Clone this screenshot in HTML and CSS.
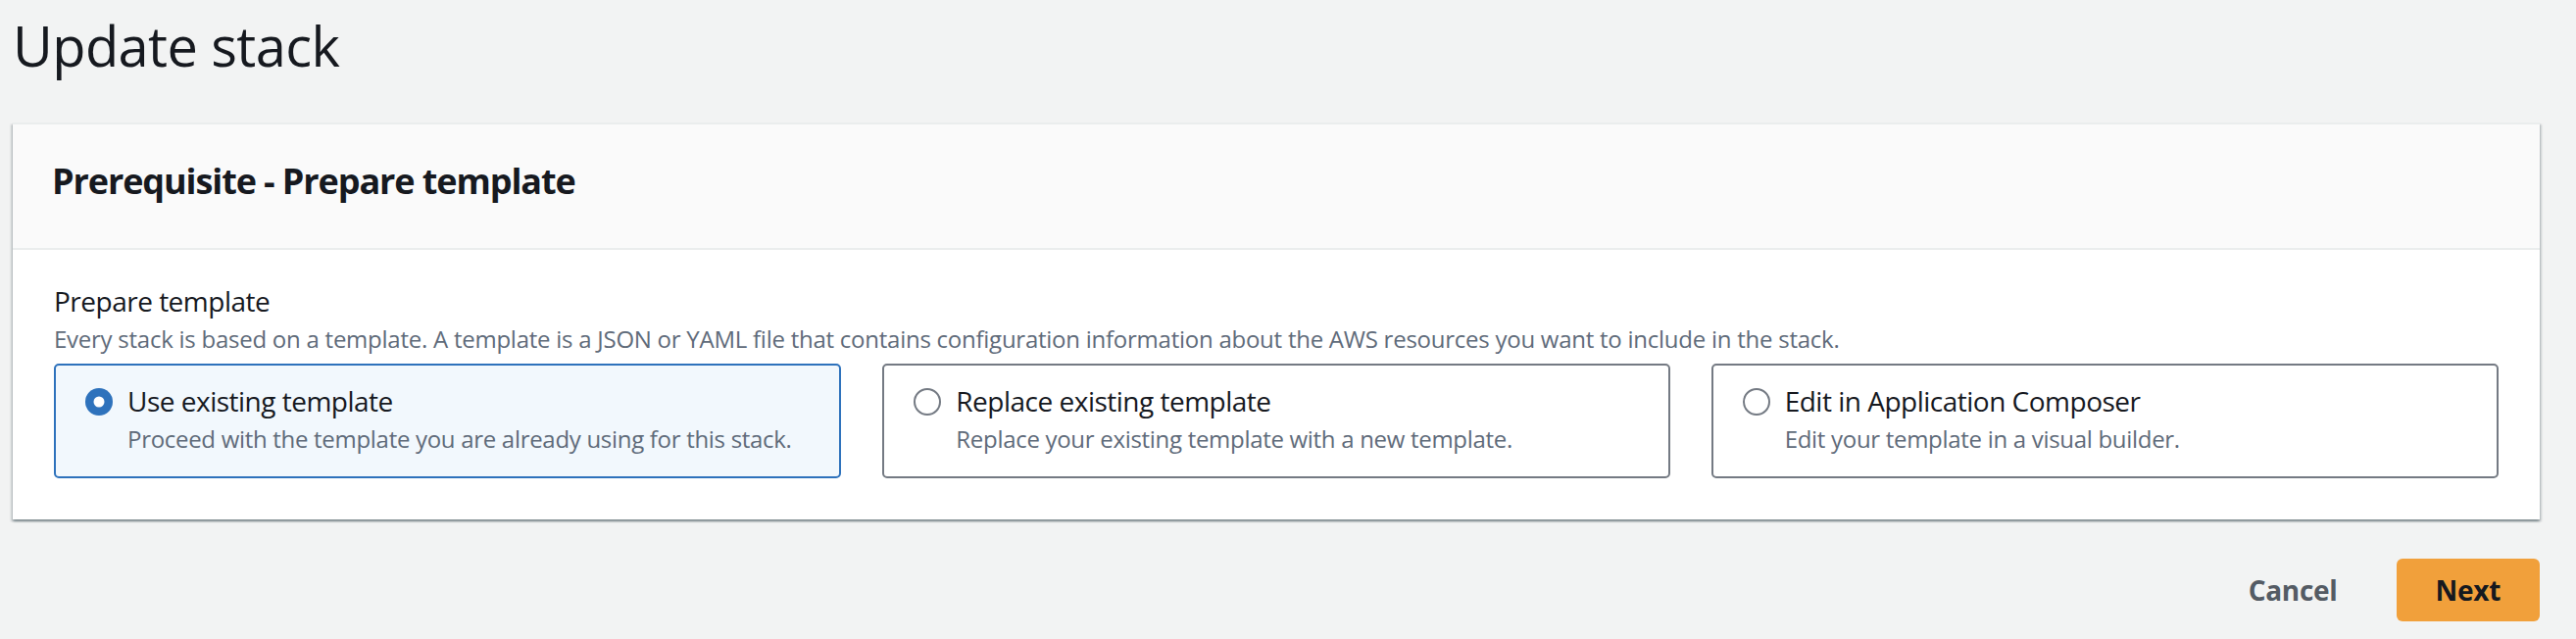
FILE: index.html
```html
<!DOCTYPE html>
<html lang="en">
<head>
<meta charset="utf-8">
<title>Update stack</title>
<link rel="stylesheet" href="styles.css">
</head>
<body>
<div class="page">
  <h1 class="title">Update stack</h1>
  <section class="card">
    <div class="card-header">Prerequisite - Prepare template</div>
    <div class="card-body">
      <div class="field-label">Prepare template</div>
      <div class="field-desc">Every stack is based on a template. A template is a JSON or YAML file that contains configuration information about the AWS resources you want to include in the stack.</div>
      <div class="tiles">
        <div class="tile selected">
          <svg class="radio" width="28" height="28" viewBox="0 0 28 28"><circle cx="14" cy="14" r="14" fill="#2e72bc"/><circle cx="14" cy="14" r="5.5" fill="#fff"/></svg>
          <div class="tile-text">
            <div class="tile-label">Use existing template</div>
            <div class="tile-desc">Proceed with the template you are already using for this stack.</div>
          </div>
        </div>
        <div class="tile">
          <svg class="radio" width="28" height="28" viewBox="0 0 28 28"><circle cx="14" cy="14" r="13" fill="#fff" stroke="#747a83" stroke-width="2"/></svg>
          <div class="tile-text">
            <div class="tile-label">Replace existing template</div>
            <div class="tile-desc">Replace your existing template with a new template.</div>
          </div>
        </div>
        <div class="tile">
          <svg class="radio" width="28" height="28" viewBox="0 0 28 28"><circle cx="14" cy="14" r="13" fill="#fff" stroke="#747a83" stroke-width="2"/></svg>
          <div class="tile-text">
            <div class="tile-label">Edit in Application Composer</div>
            <div class="tile-desc">Edit your template in a visual builder.</div>
          </div>
        </div>
      </div>
    </div>
  </section>
  <div class="actions">
    <button class="btn btn-link">Cancel</button>
    <button class="btn btn-primary">Next</button>
  </div>
</div>
</body>
</html>
```

FILE: styles.css
```css
html, body {
  margin: 0;
  padding: 0;
  background: #f2f3f3;
}
body {
  font-family: "Open Sans", "Noto Sans", sans-serif;
  color: #16191f;
}
.page {
  padding: 0 37px 0 13px;
}
.title {
  margin: 0;
  padding-top: 14px;
  font-size: 56px;
  line-height: 64px;
  font-weight: 400;
  letter-spacing: -0.6px;
  color: #16191f;
}
.card {
  margin-top: 47px;
  background: #fff;
  border-top: 2px solid #eaeded;
  box-shadow: 0 2px 2px 0 rgba(0, 28, 36, 0.3), 2px 2px 2px 0 rgba(0, 28, 36, 0.15), -2px 2px 2px 0 rgba(0, 28, 36, 0.15);
}
.card-header {
  background: #fafafa;
  padding: 34px 40px 44px;
  font-size: 36px;
  line-height: 48px;
  font-weight: 700;
  letter-spacing: -1.1px;
  border-bottom: 2px solid #eaeded;
}
.card-body {
  padding: 32px 42px 42px;
}
.field-label {
  font-size: 28px;
  line-height: 40px;
  letter-spacing: -0.5px;
  color: #16191f;
}
.field-desc {
  margin-top: 3px;
  font-size: 24px;
  line-height: 32px;
  letter-spacing: -0.25px;
  color: #5f6b7a;
}
.tiles {
  margin-top: 9px;
  display: grid;
  grid-template-columns: repeat(3, 1fr);
  gap: 42px;
}
.tile {
  box-sizing: border-box;
  height: 117px;
  border: 2px solid #747a83;
  border-radius: 5px;
  background: #fff;
  padding: 16px 30px;
  display: flex;
  align-items: flex-start;
  gap: 15px;
}
.tile.selected {
  border-color: #2e72bc;
  background: #f2f8fd;
}
.radio {
  flex: none;
  margin-top: 7px;
}
.tile-label {
  font-size: 28px;
  line-height: 40px;
  letter-spacing: -0.5px;
  color: #16191f;
}
.tile-desc {
  margin-top: 3px;
  font-size: 24px;
  line-height: 32px;
  letter-spacing: -0.3px;
  color: #5f6b7a;
}
.actions {
  margin-top: 40px;
  display: flex;
  justify-content: flex-end;
  gap: 20px;
}
.btn {
  font-family: "Open Sans", "Noto Sans", sans-serif;
  font-size: 28px;
  font-weight: 700;
  height: 64px;
  padding: 0 40px;
  border: none;
  border-radius: 6px;
  letter-spacing: -0.3px;
}
.btn-link {
  background: transparent;
  color: #545b64;
}
.btn-primary {
  background: #f1a03b;
  color: #16191f;
}
```
